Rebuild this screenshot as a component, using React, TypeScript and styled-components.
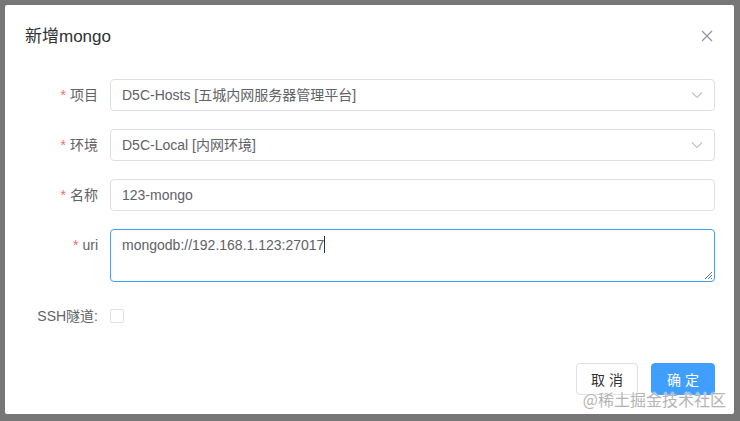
import styled, { createGlobalStyle } from "styled-components"

const GlobalStyle = createGlobalStyle`
    html, body {
        margin: 0;
        padding: 0;
        background: #777777;
    }

    body {
        font-family: "Liberation Sans", "Noto Sans CJK SC", sans-serif;
    }

    * {
        box-sizing: border-box;
    }
`

const Overlay = styled.div`
    width: 740px;
    height: 421px;
    padding: 5px 0 0 5px;
    background: #777777;
    position: relative;
    overflow: hidden;
`

const Modal = styled.div`
    width: 729px;
    height: 409px;
    background: #ffffff;
    border-radius: 2px;
    display: flex;
    flex-direction: column;
`

const Header = styled.div`
    height: 64px;
    padding: 0 20px 6px;
    display: flex;
    align-items: center;
    justify-content: space-between;
`

const Title = styled.span`
    font-size: 17px;
    color: #303133;
`

const CloseButton = styled.button`
    border: none;
    background: none;
    padding: 0;
    margin-top: 4px;
    width: 14px;
    height: 14px;
    display: flex;
    align-items: center;
    justify-content: center;
    cursor: pointer;
`

const Body = styled.form`
    padding: 10px 19px 0 20px;
    display: flex;
    flex-direction: column;
    gap: 18px;
`

const Row = styled.div`
    display: flex;
    align-items: flex-start;
`

const Label = styled.label`
    width: 85px;
    padding-right: 12px;
    height: 32px;
    line-height: 32px;
    text-align: right;
    font-size: 14px;
    color: #606266;
    flex-shrink: 0;
    white-space: nowrap;

    .star {
        color: #f56c6c;
        margin-right: 4px;
    }
`

const Field = styled.div<{ focused?: boolean; tall?: boolean }>`
    flex: 1;
    height: ${props => props.tall ? '53px' : '32px'};
    border: 1px solid ${props => props.focused ? '#409eff' : '#dcdfe6'};
    border-radius: 4px;
    padding: ${props => props.tall ? '5px 11px' : '0 11px'};
    display: flex;
    align-items: ${props => props.tall ? 'flex-start' : 'center'};
    justify-content: space-between;
    font-size: 14px;
    color: #606266;
    position: relative;
    line-height: 20px;
`

const Caret = styled.span`
    display: inline-block;
    width: 1px;
    height: 17px;
    background: #303133;
    vertical-align: -3px;
`

const Grip = styled.svg`
    position: absolute;
    right: 1px;
    bottom: 1px;
`

const CheckBox = styled.span`
    display: block;
    width: 14px;
    height: 14px;
    margin-top: 9px;
    border: 1px solid #dcdfe6;
    border-radius: 2px;
    background: #fff;
`

const Footer = styled.div`
    margin-top: auto;
    padding: 0 19px 19px 20px;
    display: flex;
    justify-content: flex-end;
    gap: 13px;
`

const Button = styled.button<{ primary?: boolean }>`
    height: 32px;
    width: ${props => props.primary ? '64px' : '62px'};
    border-radius: 4px;
    border: 1px solid ${props => props.primary ? '#409eff' : '#dcdfe6'};
    background: ${props => props.primary ? '#409eff' : '#ffffff'};
    color: ${props => props.primary ? '#ffffff' : '#303133'};
    font-family: "Liberation Sans", "Noto Sans CJK SC", sans-serif;
    font-size: 14px;
    letter-spacing: 4px;
    padding: 0 0 0 4px;
    cursor: pointer;
`

const Watermark = styled.div`
    position: absolute;
    right: 14px;
    bottom: 10px;
    font-size: 16px;
    color: #b4b4b4;
    text-shadow: 0 0 2px #ffffff, 0 0 1px #ffffff;
    font-family: "Noto Sans CJK SC", sans-serif;
`

function Chevron() {
    return (
        <svg width="12" height="8" viewBox="0 0 12 8">
            <path d="M1 1.5 L6 6.5 L11 1.5" fill="none" stroke="#c0c4cc" strokeWidth="1.2" />
        </svg>
    )
}

export default function App() {
    return (
        <Overlay>
            <GlobalStyle />
            <Modal>
                <Header>
                    <Title>新增mongo</Title>
                    <CloseButton type="button">
                        <svg width="12" height="12" viewBox="0 0 12 12">
                            <path d="M1 1 L11 11 M11 1 L1 11" stroke="#909399" strokeWidth="1.2" />
                        </svg>
                    </CloseButton>
                </Header>

                <Body>
                    <Row>
                        <Label><span className="star">*</span>项目</Label>
                        <Field>
                            <span>D5C-Hosts [五城内网服务器管理平台]</span>
                            <Chevron />
                        </Field>
                    </Row>

                    <Row>
                        <Label><span className="star">*</span>环境</Label>
                        <Field>
                            <span>D5C-Local [内网环境]</span>
                            <Chevron />
                        </Field>
                    </Row>

                    <Row>
                        <Label><span className="star">*</span>名称</Label>
                        <Field>
                            <span>123-mongo</span>
                        </Field>
                    </Row>

                    <Row>
                        <Label><span className="star">*</span>uri</Label>
                        <Field focused tall>
                            <span>mongodb://192.168.1.123:27017<Caret /></span>
                            <Grip width="9" height="9" viewBox="0 0 9 9">
                                <path d="M8 1 L1 8 M8 4 L4 8 M8 7 L7 8" stroke="#707070" strokeWidth="1" />
                            </Grip>
                        </Field>
                    </Row>

                    <Row>
                        <Label>SSH隧道:</Label>
                        <CheckBox />
                    </Row>
                </Body>

                <Footer>
                    <Button type="button">取消</Button>
                    <Button type="button" primary>确定</Button>
                </Footer>
            </Modal>
            <Watermark>@稀土掘金技术社区</Watermark>
        </Overlay>
    )
}
